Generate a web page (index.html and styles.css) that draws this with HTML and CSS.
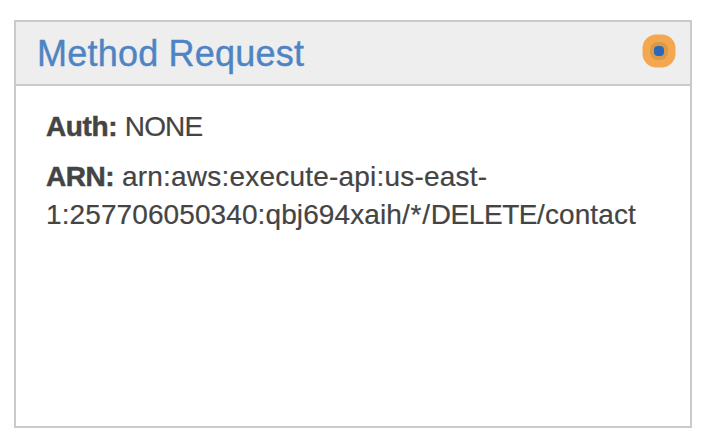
FILE: index.html
```html
<!DOCTYPE html>
<html lang="en">
<head>
<meta charset="utf-8">
<title>Method Request</title>
<link rel="stylesheet" href="styles.css">
</head>
<body>
<section class="card">
  <header class="card-header">
    <h2 class="title">Method Request</h2>
    <svg class="status" viewBox="0 0 34 34" aria-hidden="true">
      <rect x="0.5" y="0.5" width="33" height="33" rx="14" fill="#f3a74e"/>
      <rect x="8" y="8" width="18" height="18" rx="8" fill="#da9849"/>
      <rect x="12" y="12" width="10" height="10" rx="4" fill="#2b66b8"/>
    </svg>
  </header>
  <div class="card-body">
    <p class="row"><b class="label auth-label">Auth:</b> <span class="auth">NONE</span></p>
    <p class="row"><b class="label arn-label">ARN:</b> <span class="arn-start">arn:aws:execute-api:us-east-</span><br><span class="arn-end">1:257706050340:qbj694xaih<span class="stage">/*/</span><span class="verb">DELETE</span>/contact</span></p>
  </div>
</section>
</body>
</html>
```
FILE: styles.css
```css
* { box-sizing: border-box; }
body {
  margin: 0;
  padding: 20px 14px;
  background: #fff;
  color: #444;
  font-family: "Liberation Sans", Arial, sans-serif;
}
.card {
  width: 678px;
  height: 408px;
  border: 2px solid #cacaca;
}
.card-header {
  display: flex;
  align-items: flex-start;
  justify-content: space-between;
  height: 64px;
  padding: 12px 14px 0 21px;
  border-bottom: 2px solid #cacaca;
  background: #eee;
}
.title {
  margin: 0;
  color: #4f84c4;
  font-size: 36px;
  font-weight: 400;
  letter-spacing: 0.22px;
  line-height: 40px;
  -webkit-text-stroke: 0.4px #4f84c4;
}
.status { width: 34px; height: 34px; }
.card-body { padding: 22px 30px; }
.row {
  margin: 0 0 12px;
  font-size: 28px;
  line-height: 38px;
  white-space: nowrap;
  -webkit-text-stroke: 0.2px #444;
}
.label { -webkit-text-stroke: 0.5px #444; }
.auth-label { letter-spacing: -0.4px; }
.auth { letter-spacing: -0.9px; }
.arn-label { letter-spacing: -0.45px; }
.arn-start { letter-spacing: 0.21px; }
.arn-end { letter-spacing: 0.1px; }
.stage { letter-spacing: 0.8px; }
.verb { letter-spacing: -0.45px; }
```
